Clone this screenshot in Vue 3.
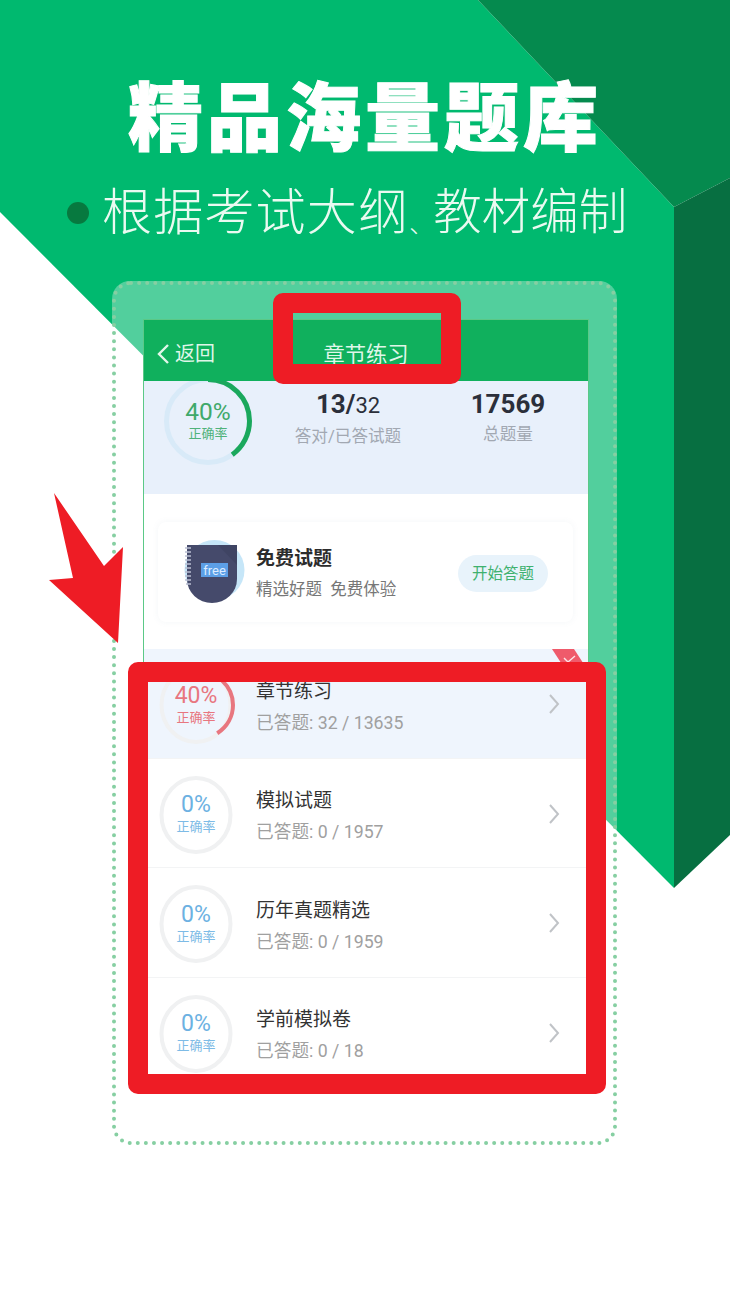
<script setup>
const rows = [
  { title: '章节练习', sub: '已答题: 32 / 13635', pct: 40, tone: 'red' },
  { title: '模拟试题', sub: '已答题: 0 / 1957', pct: 0, tone: 'blue' },
  { title: '历年真题精选', sub: '已答题: 0 / 1959', pct: 0, tone: 'blue' },
  { title: '学前模拟卷', sub: '已答题: 0 / 18', pct: 0, tone: 'blue' },
]
</script>

<template>
  <div class="page">
    <svg class="backdrop" width="730" height="1299" viewBox="0 0 730 1299">
      <polygon points="0,0 478,0 674,207 674,888 0,212" fill="#00b96f" />
      <polygon points="478,0 730,0 730,178 674,207" fill="#058a4e" />
      <polygon points="674,207 730,178 730,835 674,888" fill="#076f41" />
    </svg>

    <header class="hero">
      <h1 class="hero-title">精品海量题库</h1>
      <div class="hero-sub">
        <span class="hero-dot"></span>
        <span class="sub-a">根据考试大纲</span><span class="sub-mark">、</span><span>教材编制</span>
      </div>
    </header>

    <section class="frame">
      <svg class="dots" width="505" height="864" viewBox="0 0 505 864">
        <rect x="2" y="2" width="501" height="860" rx="17" fill="none" stroke="#86cfa2" stroke-width="4"
          stroke-linecap="round" stroke-dasharray="0 8.1" />
      </svg>
      <div class="screen">
        <div class="nav">
          <div class="nav-back">
            <svg width="14" height="24" viewBox="0 0 14 24">
              <path d="M12 3 L3 12 L12 21" fill="none" stroke="#e2f7ea" stroke-width="2.4" />
            </svg>
            <span>返回</span>
          </div>
          <div class="nav-title">章节练习</div>
        </div>

        <div class="stats">
          <div class="big-ring">
            <svg width="92" height="92" viewBox="0 0 92 92">
              <circle cx="46" cy="46" r="41.5" fill="none" stroke="#d8eaf8" stroke-width="5" />
              <circle cx="46" cy="46" r="41.5" fill="none" stroke="#1aa85c" stroke-width="5"
                stroke-dasharray="104.3 300" transform="rotate(-90 46 46)" />
            </svg>
            <div class="big-ring-text">
              <span class="big-pct">40%</span>
              <span class="big-label">正确率</span>
            </div>
          </div>
          <div class="stat">
            <div class="stat-value">13/<small>32</small></div>
            <div class="stat-label">答对/已答试题</div>
          </div>
          <div class="stat">
            <div class="stat-value">17569</div>
            <div class="stat-label">总题量</div>
          </div>
        </div>

        <div class="free-wrap">
          <div class="free-card">
            <svg class="free-icon" width="64" height="66" viewBox="0 0 64 66">
              <circle cx="30.5" cy="31" r="30" fill="#c6e6f8" />
              <path d="M3 6 H53 V40 A25 24 0 0 1 3 40 Z" fill="#454a6b" />
              <path d="M34 6 H53 V26 Z" fill="#3f4463" />
              <g stroke="#b9bed2" stroke-width="1.5">
                <path d="M1 9h6M1 13h6M1 17h6M1 21h6M1 25h6M1 29h6M1 33h6M1 37h6M1 41h6M2 45h5" />
              </g>
              <rect x="17" y="24" width="27" height="14" fill="#5c9fe6" />
              <text x="30.5" y="35.5" text-anchor="middle" class="free-tag">free</text>
            </svg>
            <div class="free-text">
              <div class="free-title">免费试题</div>
              <div class="free-sub">精选好题&nbsp;&nbsp;免费体验</div>
            </div>
            <div class="free-btn">开始答题</div>
          </div>
        </div>

        <div class="list">
          <svg class="ribbon" width="36" height="20" viewBox="0 0 36 20">
            <polygon points="0,0 22,0 35,20 13,20" fill="#ef5a6b" />
            <path d="M12 9 L16 13 L23 7" fill="none" stroke="#fde3e6" stroke-width="1.4" />
          </svg>
          <div v-for="(r, i) in rows" :key="r.title" class="row" :class="{ active: i === 0 }">
            <div class="ring" :class="r.tone">
              <svg width="80" height="80" viewBox="0 0 80 80">
                <ellipse cx="40" cy="40" rx="34.5" ry="37" fill="none" stroke="#f0f1f2" stroke-width="4" />
                <ellipse v-if="r.pct" cx="40" cy="40" rx="34.5" ry="37" fill="none" stroke="#e8767f" stroke-width="4"
                  pathLength="100" :stroke-dasharray="`${r.pct} 100`" transform="rotate(-90 40 40)" />
              </svg>
              <div class="ring-text">
                <span class="ring-pct">{{ r.pct }}%</span>
                <span class="ring-label">正确率</span>
              </div>
            </div>
            <div class="row-text">
              <div class="row-title">{{ r.title }}</div>
              <div class="row-sub">{{ r.sub }}</div>
            </div>
            <svg class="chev" width="12" height="22" viewBox="0 0 12 22">
              <path d="M2 2 L10 11 L2 20" fill="none" stroke="#c0c3c7" stroke-width="2" />
            </svg>
          </div>
        </div>
      </div>
    </section>

    <div class="red-box red-top"></div>
    <div class="red-box red-list"></div>
    <svg class="arrow" width="80" height="156" viewBox="0 0 80 156">
      <polygon points="7,3 57,76 76,57 71,153 2,90 26,88" fill="#ee1c25" />
    </svg>
  </div>
</template>

<style>
html, body { margin: 0; background: #fff; }
</style>

<style scoped>
.page {
  position: relative;
  width: 730px;
  height: 1299px;
  overflow: hidden;
  background: #fff;
  font-family: Roboto, "Noto Sans CJK SC", sans-serif;
}
.backdrop { position: absolute; left: 0; top: 0; }
.hero { position: relative; padding-top: 81px; }
.hero-title {
  margin: 0;
  text-align: center;
  font-size: 75px;
  line-height: 76px;
  letter-spacing: 4px;
  font-weight: 900;
  color: #fff;
  -webkit-text-stroke: 1px #fff;
}
.hero-sub {
  display: flex;
  align-items: center;
  margin-top: 26px;
  padding-left: 67px;
  font-size: 48.5px;
  line-height: 60px;
  font-weight: 300;
  color: #eafaf1;
  white-space: nowrap;
}
.hero-dot {
  width: 22px;
  height: 22px;
  margin-right: 13px;
  border-radius: 50%;
  background: #07793f;
  flex: none;
}
.sub-a { font-size: 50px; letter-spacing: 1.2px; }
.sub-mark { font-size: 24px; line-height: 24px; align-self: flex-end; margin-bottom: 6px; }
.frame {
  position: relative;
  z-index: 0;
  box-sizing: border-box;
  width: 505px;
  height: 864px;
  margin: 38px 0 0 112px;
  padding: 38px 0 0 31px;
  border-radius: 18px;
  background: rgba(255, 255, 255, 0.32);
}
.dots { position: absolute; left: 0; top: 0; }
.screen {
  position: relative;
  box-sizing: border-box;
  width: 446px;
  height: 768px;
  border: 1px solid #5bc987;
  background: #fff;
  overflow: hidden;
}
.nav {
  position: relative;
  z-index: 1;
  display: flex;
  align-items: center;
  justify-content: center;
  height: 61px;
  padding-top: 4px;
  box-sizing: border-box;
  background: #10b05d;
  color: #dff6e8;
  font-size: 21.3px;
}
.nav-back {
  position: absolute;
  left: 12px;
  top: 21px;
  display: flex;
  align-items: center;
  gap: 5px;
  font-size: 20px;
  line-height: 26px;
}
.stats {
  display: flex;
  height: 113px;
  background: #e8f0fb;
  padding-top: 8px;
  box-sizing: border-box;
}
.big-ring {
  position: relative;
  width: 92px;
  height: 92px;
  margin: -14px 14px 0 18px;
  flex: none;
}
.big-ring svg { display: block; }
.big-ring-text {
  position: absolute;
  inset: 0;
  display: flex;
  flex-direction: column;
  align-items: center;
  justify-content: center;
  color: #3fa96a;
}
.big-pct { font-size: 24.5px; line-height: 26px; margin-top: -2px; }
.big-label { font-size: 13px; line-height: 17px; color: #4fb27a; }
.stat { width: 160px; text-align: center; }
.stat-value {
  font-size: 26px;
  line-height: 30px;
  font-weight: 700;
  color: #2b2f3a;
}
.stat-value small { font-size: 22px; font-weight: 400; }
.stat-label {
  margin-top: 4px;
  font-size: 16.6px;
  line-height: 24px;
  color: #a2a8b2;
}
.free-wrap {
  box-sizing: border-box;
  height: 155px;
  padding: 28px 15px 0 14px;
}
.free-card {
  display: flex;
  align-items: center;
  box-sizing: border-box;
  height: 100px;
  padding: 0 25px 0 26px;
  border-radius: 8px;
  box-shadow: 0 0 6px rgba(120, 140, 170, 0.08);
}
.free-icon { flex: none; }
.free-tag { font-size: 13px; fill: #dcecff; font-family: Roboto, sans-serif; }
.free-text { margin-left: 8px; padding-top: 4px; }
.free-title { font-size: 19px; line-height: 26px; font-weight: 700; color: #2c2c2c; }
.free-sub { margin-top: 6px; font-size: 16.5px; line-height: 24px; color: #777; }
.free-btn {
  margin-left: auto;
  margin-top: 2px;
  width: 90px;
  height: 37px;
  border-radius: 19px;
  background: #e8f3fb;
  color: #3fb16f;
  font-size: 15.5px;
  line-height: 39px;
  text-align: center;
}
.list { position: relative; }
.ribbon { position: absolute; right: 0; top: 0; z-index: 1; }
.row {
  display: flex;
  align-items: center;
  box-sizing: border-box;
  height: 109.5px;
  padding: 4px 28px 0 12px;
  border-bottom: 1px solid #f3f4f5;
  background: #fff;
}
.row.active { background: #eff5fd; }
.ring { position: relative; width: 80px; height: 80px; flex: none; }
.ring svg { display: block; }
.ring-text {
  position: absolute;
  inset: 0;
  display: flex;
  flex-direction: column;
  align-items: center;
  justify-content: center;
  padding-top: 2px;
}
.ring-pct { font-size: 23px; line-height: 26px; margin-top: -3px; }
.ring-label { font-size: 13px; line-height: 18px; }
.ring.red .ring-pct, .ring.red .ring-label { color: #e8767f; }
.ring.blue .ring-pct { color: #6cb1e2; }
.ring.blue .ring-label { color: #7dbbe6; }
.row-text { margin-left: 20px; margin-top: 4px; }
.row-title { font-size: 19px; line-height: 26px; color: #333; }
.row-sub { margin-top: 5px; font-size: 17.7px; line-height: 26px; color: #a0a0a0; }
.chev { margin-left: auto; margin-top: -2px; flex: none; }
.red-box {
  position: absolute;
  box-sizing: border-box;
  border: 20px solid #ee1c25;
  border-radius: 10px;
}
.red-top { left: 273px; top: 293px; width: 188px; height: 91px; }
.red-list { left: 128px; top: 662px; width: 478px; height: 432px; }
.arrow { position: absolute; left: 47px; top: 490px; }
</style>
